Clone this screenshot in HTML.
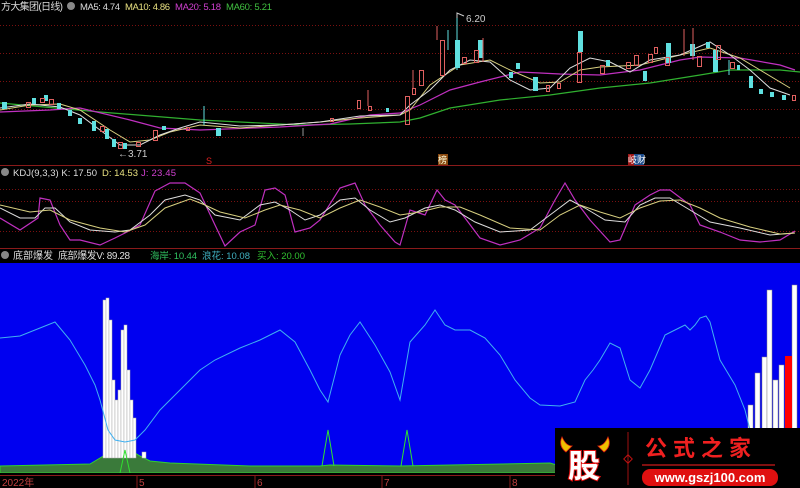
<!DOCTYPE html>
<html><head><meta charset="utf-8"><style>
body{margin:0;background:#000;width:800px;height:488px;overflow:hidden;font-family:"Liberation Sans","Noto Sans CJK SC",sans-serif;}
svg{display:block}
text{font-family:"Liberation Sans","Noto Sans CJK SC",sans-serif;}
</style></head><body>
<svg width="800" height="488" viewBox="0 0 800 488" xmlns="http://www.w3.org/2000/svg">
<rect width="800" height="488" fill="#000"/>
<g stroke="#7a1010" stroke-width="1" stroke-dasharray="1,2">
<line x1="0" y1="25.5" x2="800" y2="25.5"/><line x1="0" y1="53.5" x2="800" y2="53.5"/><line x1="0" y1="81.5" x2="800" y2="81.5"/><line x1="0" y1="109.5" x2="800" y2="109.5"/><line x1="0" y1="137.5" x2="800" y2="137.5"/>
<line x1="0" y1="189.5" x2="800" y2="189.5"/><line x1="0" y1="201.5" x2="800" y2="201.5"/><line x1="0" y1="231.5" x2="800" y2="231.5"/>
</g>
<line x1="0" y1="165.5" x2="800" y2="165.5" stroke="#8a1a1a"/>
<line x1="0" y1="248.5" x2="800" y2="248.5" stroke="#8a1a1a"/>
<text x="1" y="10" font-size="10" fill="#ddd" textLength="62">方大集团(日线)</text>
<circle cx="71" cy="6" r="4" fill="#888"/>
<text x="80" y="10" font-size="9.5" fill="#ddd" textLength="40">MA5: 4.74</text>
<text x="125" y="10" font-size="9.5" fill="#e8e080" textLength="45">MA10: 4.86</text>
<text x="175" y="10" font-size="9.5" fill="#d040d0" textLength="46">MA20: 5.18</text>
<text x="226" y="10" font-size="9.5" fill="#40c040" textLength="46">MA60: 5.21</text>
<polyline fill="none" stroke="#30b030" stroke-width="1.2" points="0,103 100,112 200,120 300,125 350,124 400,122 420,118 450,108 500,100 550,95 600,88 650,83 700,75 730,70 780,70 800,72"/>
<polyline fill="none" stroke="#c030c0" stroke-width="1.2" points="0,112 50,110 80,108 130,120 160,128 200,130 280,127 330,124 370,115 400,113 420,105 450,90 480,82 520,72 560,74 600,75 640,70 680,60 700,57 740,58 780,65 795,70"/>
<polyline fill="none" stroke="#d8d080" stroke-width="1" points="0,110 30,105 60,104 80,110 110,130 130,142 150,140 170,132 200,125 240,128 280,125 320,122 360,118 400,115 410,110 430,85 460,65 490,60 510,70 540,83 560,82 580,70 600,67 620,66 640,65 680,55 710,48 740,58 760,70 790,88"/>
<polyline fill="none" stroke="#ddd" stroke-width="1" points="0,108 30,104 60,107 80,115 100,130 120,145 140,145 160,135 180,128 200,122 240,126 280,125 320,122 360,116 400,115 410,105 430,90 450,70 470,60 490,62 510,80 530,90 550,88 570,68 590,58 610,62 630,72 650,60 680,55 710,42 730,55 750,70 770,88 790,95"/>
<g fill="#60e0e0">
<rect x="2" y="102" width="5" height="7"/><rect x="32" y="98" width="4" height="6"/><rect x="44" y="95" width="4" height="6"/><rect x="57" y="103" width="4" height="6"/><rect x="68" y="110" width="4" height="6"/><rect x="78" y="118" width="4" height="6"/><rect x="92" y="121" width="4" height="10"/><rect x="105" y="129" width="4" height="10"/><rect x="112" y="139" width="4" height="8"/><rect x="123" y="143" width="4" height="6"/><rect x="162" y="126" width="4" height="4"/><rect x="216" y="128" width="5" height="8"/><rect x="386" y="108" width="3" height="4"/><rect x="455" y="40" width="5" height="28"/><rect x="478" y="40" width="5" height="18"/><rect x="509" y="72" width="4" height="6"/><rect x="516" y="63" width="4" height="6"/><rect x="533" y="77" width="5" height="14"/><rect x="578" y="31" width="5" height="21"/><rect x="606" y="60" width="4" height="6"/><rect x="643" y="71" width="4" height="10"/><rect x="666" y="43" width="5" height="20"/><rect x="690" y="44" width="5" height="12"/><rect x="706" y="42" width="4" height="6"/><rect x="713" y="50" width="5" height="22"/><rect x="737" y="65" width="3" height="5"/><rect x="749" y="76" width="4" height="12"/><rect x="759" y="89" width="4" height="5"/><rect x="770" y="92" width="4" height="5"/><rect x="782" y="95" width="4" height="5"/>
</g>
<g stroke="#60e0e0"><line x1="204" y1="106" x2="204" y2="125"/><line x1="457" y1="18" x2="457" y2="70"/><line x1="448" y1="30" x2="448" y2="50"/><line x1="729" y1="60" x2="729" y2="75"/></g>
<g fill="none" stroke="#e06060">
<rect x="26.5" y="102.5" width="4" height="5"/><rect x="40.5" y="98.5" width="4" height="4"/><rect x="49.5" y="99.5" width="4" height="5"/><rect x="100.5" y="126.5" width="4" height="5"/><rect x="118.5" y="142.5" width="4" height="6"/><rect x="136.5" y="142.5" width="4" height="4"/><rect x="153.5" y="130.5" width="4" height="10"/><rect x="186.5" y="127.5" width="3" height="3"/><rect x="330.5" y="118.5" width="3" height="3"/><rect x="357.5" y="100.5" width="3" height="8"/><rect x="368.5" y="106.5" width="3" height="4"/><rect x="405.5" y="96.5" width="4" height="28"/><rect x="412.5" y="88.5" width="3" height="6"/><rect x="419.5" y="70.5" width="4" height="15"/><rect x="440.5" y="40.5" width="4" height="35"/><rect x="462.5" y="57.5" width="4" height="6"/><rect x="474.5" y="50.5" width="4" height="12"/><rect x="546.5" y="85.5" width="3" height="6"/><rect x="557.5" y="83.5" width="3" height="5"/><rect x="577.5" y="52.5" width="4" height="30"/><rect x="600.5" y="65.5" width="4" height="8"/><rect x="626.5" y="62.5" width="4" height="6"/><rect x="634.5" y="55.5" width="4" height="10"/><rect x="648.5" y="54.5" width="4" height="8"/><rect x="654.5" y="47.5" width="3" height="6"/><rect x="665.5" y="57.5" width="4" height="8"/><rect x="697.5" y="56.5" width="4" height="10"/><rect x="716.5" y="45.5" width="4" height="14"/><rect x="730.5" y="62.5" width="4" height="6"/><rect x="792.5" y="95.5" width="3" height="5"/>
</g>
<g stroke="#e06060"><line x1="368" y1="90" x2="368" y2="106"/><line x1="413" y1="70" x2="413" y2="88"/><line x1="437" y1="26" x2="437" y2="40"/><line x1="483" y1="38" x2="483" y2="62"/><line x1="693" y1="28" x2="693" y2="60"/><line x1="684" y1="29" x2="684" y2="56"/></g>
<line x1="303" y1="128" x2="303" y2="136" stroke="#999"/>
<text x="118" y="157" font-size="10" fill="#ccc">←3.71</text>
<text x="466" y="22" font-size="10" fill="#ccc">6.20</text>
<polyline points="457,18 457,13 464,16" fill="none" stroke="#ccc"/>
<text x="206" y="164" font-size="9" fill="#e02020">S</text>
<rect x="438" y="154" width="10" height="11" fill="#8a4a10"/><text x="438" y="163" font-size="9" fill="#ffd">榜</text>
<rect x="628" y="154" width="6" height="11" fill="#a01818"/><rect x="634" y="154" width="10" height="11" fill="#1a4a8a"/><text x="628" y="163" font-size="9" fill="#fff">岐财</text>
<circle cx="5" cy="172" r="4" fill="#888"/>
<text x="13" y="176" font-size="9.5" fill="#ddd" textLength="84">KDJ(9,3,3)  K: 17.50</text>
<text x="102" y="176" font-size="9.5" fill="#e8e080" textLength="36">D: 14.53</text>
<text x="141" y="176" font-size="9.5" fill="#d040d0" textLength="35">J: 23.45</text>
<polyline fill="none" stroke="#c030c0" stroke-width="1.2" points="0,218 20,230 38,218 40,198 50,200 60,225 70,240 80,240 100,245 115,238 125,233 140,225 155,191 170,183 185,183 200,193 215,225 225,246 240,232 255,225 265,190 275,188 285,195 295,232 310,228 320,220 340,188 355,183 365,205 380,225 395,242 400,245 410,210 425,215 437,190 445,200 455,205 465,218 480,238 500,245 520,240 540,228 555,200 565,183 575,200 590,220 610,242 620,240 635,205 650,195 660,190 670,190 690,205 700,225 720,232 740,240 760,242 780,240 795,231"/>
<polyline fill="none" stroke="#ddd" stroke-width="1" points="0,208 20,218 35,218 45,208 55,208 70,222 90,230 115,232 130,230 150,215 165,200 185,195 200,200 215,215 240,220 260,205 275,202 290,210 305,220 320,215 340,200 355,198 370,210 390,222 405,218 425,208 440,205 455,210 475,222 500,232 530,230 550,215 570,200 585,208 605,220 625,222 640,205 655,198 670,198 690,210 710,222 740,228 770,235 795,233"/>
<polyline fill="none" stroke="#d8d080" stroke-width="1" points="0,205 30,212 50,210 70,220 100,228 125,232 145,225 165,208 190,199 205,205 220,212 245,218 265,210 280,205 300,210 320,218 340,208 360,200 380,207 400,215 420,212 440,207 460,207 480,215 510,228 540,230 560,215 580,205 600,212 620,218 640,208 660,201 680,200 700,208 720,218 750,227 780,234 795,233"/>
<circle cx="5" cy="255" r="4" fill="#888"/>
<text x="13" y="259" font-size="10" fill="#ddd">底部爆发</text>
<text x="58" y="259" font-size="10" fill="#ddd" textLength="72">底部爆发V: 89.28</text>
<text x="150" y="259" font-size="9.5" fill="#30c060" textLength="47">海岸: 10.44</text>
<text x="202" y="259" font-size="9.5" fill="#40b0c0" textLength="48">浪花: 10.08</text>
<text x="257" y="259" font-size="9.5" fill="#30c030" textLength="48">买入: 20.00</text>
<rect x="0" y="263" width="800" height="210" fill="#0000f0"/>
<path d="M0,466 L90,464 L100,458 L110,452 L120,450 L130,450 L140,456 L150,461 L170,463 L250,466 L320,466 L330,465 L400,466 L550,463 L560,466 L800,466 L800,473 L0,473Z" fill="#3a7a3a" stroke="#30d030" stroke-width="1"/>
<g fill="#fff" stroke="#aaa" stroke-width="0.5">
<rect x="103" y="300" width="3" height="158"/><rect x="106" y="298" width="3" height="160"/><rect x="109" y="320" width="3" height="138"/><rect x="112" y="380" width="3" height="78"/><rect x="115" y="400" width="3" height="58"/><rect x="118" y="390" width="3" height="68"/><rect x="121" y="330" width="3" height="128"/><rect x="124" y="325" width="3" height="133"/><rect x="127" y="370" width="3" height="88"/><rect x="130" y="400" width="3" height="58"/><rect x="133" y="418" width="3" height="40"/><rect x="142" y="452" width="4" height="6"/>
</g>
<g fill="#fff" stroke="#888" stroke-width="0.5">
<rect x="748" y="405" width="5" height="68"/><rect x="755" y="373" width="5" height="100"/><rect x="762" y="357" width="5" height="116"/><rect x="767" y="290" width="5" height="183"/><rect x="773" y="380" width="5" height="93"/><rect x="779" y="365" width="5" height="108"/><rect x="792" y="285" width="5" height="188"/>
</g>
<rect x="785" y="356" width="7" height="117" fill="#f00"/>
<polyline fill="none" stroke="#40b0f0" stroke-width="1" points="0,338 20,336 40,328 55,322 70,340 85,365 95,385 100,400 108,430 115,440 125,442 135,440 145,430 160,410 175,395 190,380 200,370 215,360 240,348 260,340 280,330 295,342 310,370 320,390 328,402 340,355 350,335 360,322 375,345 390,372 400,400 410,342 425,325 435,310 445,325 455,330 470,330 485,338 500,355 515,380 530,398 540,405 560,406 575,402 585,380 593,370 600,360 610,343 620,348 630,380 640,388 650,370 665,335 675,330 685,325 690,330 695,325 700,318 706,316 710,322 720,360 735,385 745,410 750,430"/>
<g fill="none" stroke="#30e030" stroke-width="1">
<polyline points="120,473 125,450 130,473"/><polyline points="322,466 328,430 334,466"/><polyline points="401,466 407,430 413,466"/>
</g>
<rect x="0" y="473" width="800" height="15" fill="#000"/>
<line x1="0" y1="475.5" x2="800" y2="475.5" stroke="#8a1a1a"/>
<text x="2" y="486" font-size="10" fill="#c04040">2022年</text>
<line x1="137" y1="475" x2="137" y2="488" stroke="#8a1a1a"/><text x="139" y="486" font-size="10" fill="#c04040">5</text>
<line x1="255" y1="475" x2="255" y2="488" stroke="#8a1a1a"/><text x="257" y="486" font-size="10" fill="#c04040">6</text>
<line x1="382" y1="475" x2="382" y2="488" stroke="#8a1a1a"/><text x="384" y="486" font-size="10" fill="#c04040">7</text>
<line x1="510" y1="475" x2="510" y2="488" stroke="#8a1a1a"/><text x="512" y="486" font-size="10" fill="#c04040">8</text>
<rect x="555" y="428" width="245" height="60" fill="#000"/>
<path d="M566,452 Q558,446 562,437 Q566,446 572,446 Z M604,452 Q612,446 608,437 Q604,446 598,446Z" fill="#f0c000" stroke="#e02010" stroke-width="0.8"/>
<text x="568" y="477" font-size="32" font-weight="bold" fill="#fff" stroke="#e01010" stroke-width="2" paint-order="stroke" style="font-family:'Noto Sans CJK SC',sans-serif">股</text>
<line x1="628" y1="432" x2="628" y2="485" stroke="#a01010"/>
<rect x="625" y="456" width="6" height="6" transform="rotate(45 628 459)" fill="none" stroke="#c01010"/>
<text x="645" y="456" font-size="22" font-weight="bold" fill="#f02020" letter-spacing="6" style="font-family:'Noto Sans CJK SC',sans-serif">公式之家</text>
<line x1="642" y1="465" x2="775" y2="465" stroke="#801010" stroke-width="2"/>
<rect x="642" y="469" width="136" height="17" rx="8" fill="#e01010"/>
<text x="710" y="482" font-size="13" font-weight="bold" fill="#fff" text-anchor="middle">www.gszj100.com</text>
</svg>
</body></html>
